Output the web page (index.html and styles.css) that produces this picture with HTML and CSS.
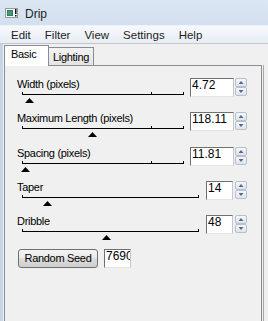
FILE: index.html
```html
<!DOCTYPE html>
<html>
<head>
<meta charset="utf-8">
<link rel="stylesheet" href="styles.css">
</head>
<body>
<div class="window">
  <div class="titlebar">
    <svg class="app-icon" width="13" height="10" viewBox="0 0 13 10">
      <rect x="0.5" y="0.5" width="12" height="9" fill="#f7f7f7" stroke="#9a9a9a"/>
      <rect x="2" y="2" width="6" height="6" fill="#2d7d62"/>
      <rect x="3" y="3" width="4" height="4" fill="#3f9a7a"/>
      <rect x="10" y="1" width="1.5" height="5" fill="#111"/>
      <rect x="10" y="7" width="1.5" height="1.5" fill="#111"/>
    </svg>
    <span class="title">Drip</span>
  </div>
  <div class="menubar">
    <span class="menu-item">Edit</span>
    <span class="menu-item">Filter</span>
    <span class="menu-item">View</span>
    <span class="menu-item">Settings</span>
    <span class="menu-item">Help</span>
  </div>
  <div class="client">
    <div class="frame-left"></div>
    <div class="main">
      <div class="tabs">
        <div class="tab active">Basic</div>
        <div class="tab inactive">Lighting</div>
      </div>
      <div class="panel-row">
        <div class="panel">
          <div class="row">
            <div class="ctrl">
              <div class="label">Width (pixels)</div>
              <div class="track">
                <span class="tick" style="left:0"></span>
                <span class="tick" style="left:129px"></span>
                <span class="tick end"></span>
                <span class="thumb" style="left:3px"></span>
              </div>
            </div>
            <div class="field wide">4.72</div>
            <div class="spin wide-spin"><div class="spin-btn"><span class="arrow up"></span></div><div class="spin-btn"><span class="arrow down"></span></div></div>
          </div>
          <div class="row">
            <div class="ctrl">
              <div class="label">Maximum Length (pixels)</div>
              <div class="track">
                <span class="tick" style="left:0"></span>
                <span class="tick" style="left:129px"></span>
                <span class="tick end"></span>
                <span class="thumb" style="left:66px"></span>
              </div>
            </div>
            <div class="field wide">118.11</div>
            <div class="spin wide-spin"><div class="spin-btn"><span class="arrow up"></span></div><div class="spin-btn"><span class="arrow down"></span></div></div>
          </div>
          <div class="row shift">
            <div class="ctrl">
              <div class="label">Spacing (pixels)</div>
              <div class="track">
                <span class="tick" style="left:0"></span>
                <span class="tick" style="left:129px"></span>
                <span class="tick end"></span>
                <span class="thumb" style="left:-1px"></span>
              </div>
            </div>
            <div class="field wide">11.81</div>
            <div class="spin wide-spin"><div class="spin-btn"><span class="arrow up"></span></div><div class="spin-btn"><span class="arrow down"></span></div></div>
          </div>
          <div class="row">
            <div class="ctrl">
              <div class="label">Taper</div>
              <div class="track">
                <span class="tick" style="left:0"></span>
                <span class="tick end"></span>
                <span class="thumb" style="left:21px"></span>
              </div>
            </div>
            <div class="field narrow">14</div>
            <div class="spin narrow-spin"><div class="spin-btn"><span class="arrow up"></span></div><div class="spin-btn"><span class="arrow down"></span></div></div>
          </div>
          <div class="row">
            <div class="ctrl">
              <div class="label">Dribble</div>
              <div class="track">
                <span class="tick" style="left:0"></span>
                <span class="tick end"></span>
                <span class="thumb" style="left:80px"></span>
              </div>
            </div>
            <div class="field narrow">48</div>
            <div class="spin narrow-spin"><div class="spin-btn"><span class="arrow up"></span></div><div class="spin-btn"><span class="arrow down"></span></div></div>
          </div>
          <div class="seed-row">
            <div class="btn">Random Seed</div>
            <div class="field seed">7690</div>
          </div>
        </div>
        <div class="edge"></div>
      </div>
    </div>
  </div>
</div>
</body>
</html>
```
FILE: styles.css
```css
html, body {
  margin: 0;
  padding: 0;
  background: #f0f0f0;
}
.window {
  width: 268px;
  height: 321px;
  overflow: hidden;
  background: #f0f0f0;
  font-family: "Liberation Sans", Arial, sans-serif;
  color: #000;
}
.titlebar {
  height: 25px;
  border-bottom: 1px solid #eef3f9;
  background: linear-gradient(#dbe6f3, #d3e0ef);
  display: flex;
  align-items: flex-start;
}
.app-icon {
  margin: 8px 0 0 5px;
  flex: none;
}
.title {
  margin: 7px 0 0 7px;
  font-size: 12px;
  line-height: 14px;
  color: #1e1e1e;
}
.menubar {
  height: 16px;
  padding: 1px 0 0 4px;
  border-bottom: 1px solid #c2c8d0;
  background: linear-gradient(#f7f9fc, #e8edf4);
  display: flex;
  font-size: 11.5px;
  line-height: 16px;
}
.menu-item {
  padding: 0 7px;
  color: #1e1e1e;
}
.client {
  display: flex;
  height: 277px;
}
.frame-left {
  width: 4px;
  flex: none;
  background: linear-gradient(to right, #c8d5e6 3px, #eef2f7 3px);
}
.main {
  flex: 1;
  display: flex;
  flex-direction: column;
}
.tabs {
  display: flex;
  align-items: flex-end;
  height: 20px;
  margin-top: 1px;
}
.tab {
  box-sizing: border-box;
  border: 1px solid #898c95;
  border-bottom: none;
  font-size: 11px;
  letter-spacing: -0.3px;
  line-height: 13px;
  white-space: nowrap;
}
.tab.active {
  width: 45px;
  height: 21px;
  padding: 2px 0 0 6px;
  margin-bottom: -1px;
  background: #fff;
  position: relative;
  z-index: 1;
}
.tab.inactive {
  width: 46px;
  height: 18px;
  padding: 3px 0 0 4px;
  margin-left: -1px;
  background: linear-gradient(#f2f2f2, #e4e4e4);
}
.panel-row {
  display: flex;
  flex: 1;
}
.panel {
  width: 258px;
  flex: none;
  box-sizing: border-box;
  border: 1px solid #898c95;
  border-bottom: none;
  padding-top: 11px;
}
.edge {
  margin-left: 1px;
  border-left: 1px solid #a9a9a9;
  width: 4px;
}
.row {
  display: flex;
  align-items: flex-start;
  height: 34px;
  padding: 0 14px 0 12px;
}
.row.shift {
  margin-top: 1px;
}
.ctrl {
  flex: 1;
  min-width: 0;
}
.label {
  padding-top: 1px;
  height: 13px;
  line-height: 13px;
  font-size: 11px;
  letter-spacing: -0.3px;
  white-space: nowrap;
}
.track {
  position: relative;
  height: 13px;
  margin-left: 5px;
}
.track::before {
  content: "";
  position: absolute;
  left: 0;
  right: 0;
  top: 3px;
  height: 1px;
  background: #000;
}
.tick {
  position: absolute;
  top: 1px;
  width: 1px;
  height: 3px;
  background: #000;
}
.tick.end {
  right: 0;
}
.thumb {
  position: absolute;
  top: 7px;
  width: 9px;
  height: 5px;
  background: #000;
  clip-path: polygon(50% 0, 100% 100%, 0 100%);
}
.field {
  box-sizing: border-box;
  height: 19px;
  margin-top: 1px;
  border: 1px solid;
  border-color: #707070 #c8c8c8 #e4e4e4 #707070;
  background: #fff;
  font-size: 12px;
  line-height: 13px;
  padding-left: 1px;
  overflow: hidden;
  white-space: nowrap;
}
.field.wide {
  width: 44px;
  margin-left: 6px;
}
.field.narrow {
  width: 27px;
  margin-left: 7px;
}
.spin {
  margin-top: 1px;
  width: 12px;
  display: flex;
  flex-direction: column;
}
.wide-spin {
  margin-left: 1px;
}
.narrow-spin {
  margin-left: 2px;
}
.spin-btn {
  box-sizing: border-box;
  height: 9px;
  border: 1px solid #b7c0ce;
  border-radius: 2px;
  background: linear-gradient(#f6f7f9, #dfe3ea);
  display: flex;
  align-items: center;
  justify-content: center;
}
.arrow {
  width: 5px;
  height: 3px;
  background: #55688a;
}
.arrow.up {
  clip-path: polygon(50% 0, 100% 100%, 0 100%);
}
.arrow.down {
  clip-path: polygon(0 0, 100% 0, 50% 100%);
}
.seed-row {
  display: flex;
  align-items: flex-start;
  margin-top: 1px;
  padding-left: 13px;
}
.btn {
  box-sizing: border-box;
  width: 80px;
  height: 19px;
  border: 1px solid #707070;
  border-radius: 3px;
  background: linear-gradient(#f3f3f3, #ebebeb 45%, #dddddd 50%, #cfcfcf);
  font-size: 11px;
  letter-spacing: -0.3px;
  line-height: 17px;
  text-align: center;
  white-space: nowrap;
}
.field.seed {
  width: 27px;
  margin-left: 6px;
  margin-top: 0;
}
```
